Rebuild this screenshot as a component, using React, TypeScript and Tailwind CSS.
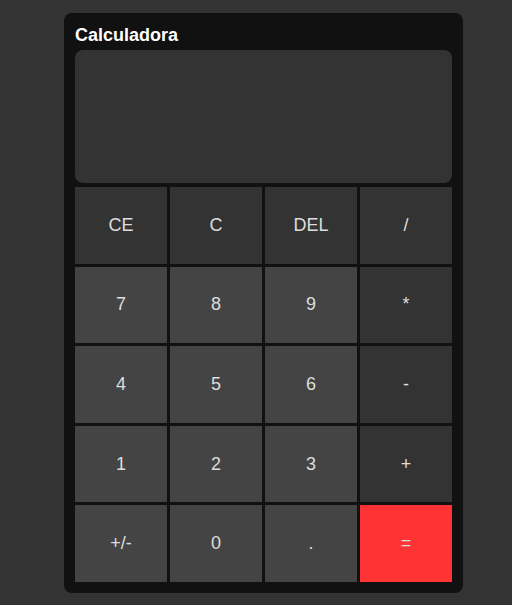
const keys: { label: string; kind: "op" | "num" | "eq" }[] = [
  { label: "CE", kind: "op" },
  { label: "C", kind: "op" },
  { label: "DEL", kind: "op" },
  { label: "/", kind: "op" },
  { label: "7", kind: "num" },
  { label: "8", kind: "num" },
  { label: "9", kind: "num" },
  { label: "*", kind: "op" },
  { label: "4", kind: "num" },
  { label: "5", kind: "num" },
  { label: "6", kind: "num" },
  { label: "-", kind: "op" },
  { label: "1", kind: "num" },
  { label: "2", kind: "num" },
  { label: "3", kind: "num" },
  { label: "+", kind: "op" },
  { label: "+/-", kind: "num" },
  { label: "0", kind: "num" },
  { label: ".", kind: "num" },
  { label: "=", kind: "eq" },
];

export default function App() {
  return (
    <div className="min-h-[605px] w-full bg-[#333333] pt-[13px] font-['Liberation_Sans',Arial,sans-serif]">
      <div className="ml-[64px] w-[399px] rounded-[8px] bg-[#111111] p-[11px]">
        <h1 className="mb-[3px] text-[18px] leading-[23px] font-bold text-white">Calculadora</h1>
        <div className="h-[133px] rounded-[8px] bg-[#333333]" />
        <div className="mt-[4px] grid grid-cols-4 gap-[3px]">
          {keys.map((k) => (
            <button
              key={k.label}
              className={
                "flex h-[76.6px] items-center justify-center text-[18px] text-[#dddddd] " +
                (k.kind === "op"
                  ? "bg-[#333333]"
                  : k.kind === "num"
                  ? "bg-[#444444]"
                  : "bg-[#ff3333]")
              }
            >
              {k.label}
            </button>
          ))}
        </div>
      </div>
    </div>
  );
}
